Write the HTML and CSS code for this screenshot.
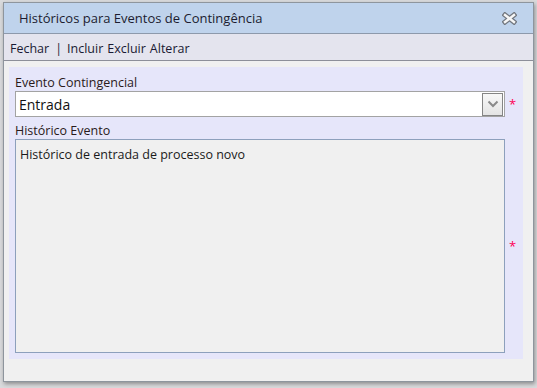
FILE: index.html
```html
<!DOCTYPE html>
<html lang="pt">
<head>
  <meta charset="UTF-8" />
  <title>Históricos para Eventos de Contingência</title>
  <link rel="stylesheet" href="styles.css">
</head>
<body>
  <div class="dialog">
    <!-- Title bar -->
    <div class="titlebar">
      <span class="title">Históricos para Eventos de Contingência</span>
      <span class="close-btn">
        <svg width="15" height="13" viewBox="0 0 15 13">
          <path d="M3 3 L12 10 M12 3 L3 10" stroke="#72777f" stroke-width="5" stroke-linecap="square"/>
          <path d="M3 3 L12 10 M12 3 L3 10" stroke="#f6f6f6" stroke-width="2.4" stroke-linecap="square"/>
        </svg>
      </span>
    </div>

    <!-- Toolbar -->
    <div class="toolbar">
      <a href="#">Fechar</a>
      <span class="sep">|</span>
      <a href="#">Incluir</a>
      <a href="#">Excluir</a>
      <a href="#">Alterar</a>
    </div>

    <div class="content">
      <div class="panel">
        <label class="field-label">Evento Contingencial</label>
        <div class="field-row">
          <div class="select">
            <span class="select-value">Entrada</span>
            <span class="select-btn">
              <svg width="12" height="8" viewBox="0 0 12 8">
                <path d="M1.5 1.5 L6 6 L10.5 1.5" fill="none" stroke="#8a8a8a" stroke-width="2"/>
              </svg>
            </span>
          </div>
          <span class="required">*</span>
        </div>

        <label class="field-label">Histórico Evento</label>
        <div class="field-row">
          <div class="textarea">Histórico de entrada de processo novo</div>
          <span class="required">*</span>
        </div>
      </div>
    </div>
  </div>
</body>
</html>
```

FILE: styles.css
```css
body {
  margin: 0;
  background: #d9dadc;
  font-family: "Open Sans", sans-serif;
  color: #1a1a1a;
  height: 388px;
  overflow: hidden;
}

/* Dialog window */
.dialog {
  margin: 2px 0 0 3px;
  width: 529px;
  height: 378px;
  border: 1px solid #8e959d;
  background: #f0f0f0;
  box-shadow: 1px 2px 4px rgba(0,0,0,0.35);
  display: flex;
  flex-direction: column;
}

.titlebar {
  height: 31px;
  background: #bfd3ec;
  border-bottom: 1px solid #8d99ab;
  display: flex;
  align-items: center;
  justify-content: space-between;
  padding: 0 16px 0 15px;
}

.title {
  font-size: 13px;
  color: #1c1c30;
}

.close-btn {
  display: flex;
  align-items: center;
}

.toolbar {
  height: 27px;
  background: #e4e4ee;
  border-bottom: 1px solid #8d8f99;
  display: flex;
  align-items: center;
  padding: 3px 6px 0;
  box-sizing: border-box;
  font-size: 12.5px;
}

.toolbar a {
  color: #1a1a33;
  text-decoration: none;
  margin-right: 4px;
}

.toolbar .sep {
  margin: 0 5px 0 2px;
  color: #1a1a33;
}

.content {
  flex: 1;
  padding: 6px 10px 22px 5px;
  display: flex;
}

.panel {
  flex: 1;
  background: #e6e6fa;
  padding: 8px 0 6px 6px;
  display: flex;
  flex-direction: column;
}

.field-label {
  font-size: 12.5px;
  color: #2a1a1a;
  line-height: 16px;
}

.field-row {
  display: flex;
  align-items: center;
}

.field-row + .field-label {
  margin-top: 6px;
}

.select {
  width: 488px;
  height: 24px;
  border: 1px solid #a3a3a3;
  background: #ffffff;
  display: flex;
  align-items: center;
  justify-content: space-between;
}

.select-value {
  font-size: 14px;
  padding-left: 3px;
  color: #111;
}

.select-btn {
  width: 19px;
  height: 21px;
  margin-right: 1px;
  border: 1px solid #858585;
  background: linear-gradient(#f8f8f8, #e4e4e4);
  display: flex;
  align-items: center;
  justify-content: center;
}

.required {
  color: #ff0055;
  font-size: 13px;
  margin-left: 4px;
  line-height: 1;
}

.field-row:last-child {
  flex: 1;
  align-items: center;
}

.textarea {
  width: 484px;
  height: 206px;
  border: 1px solid #8da0bc;
  background: #f0f0f0;
  padding: 6px 0 0 4px;
  font-size: 12.5px;
  color: #1a1a1a;
}
```
